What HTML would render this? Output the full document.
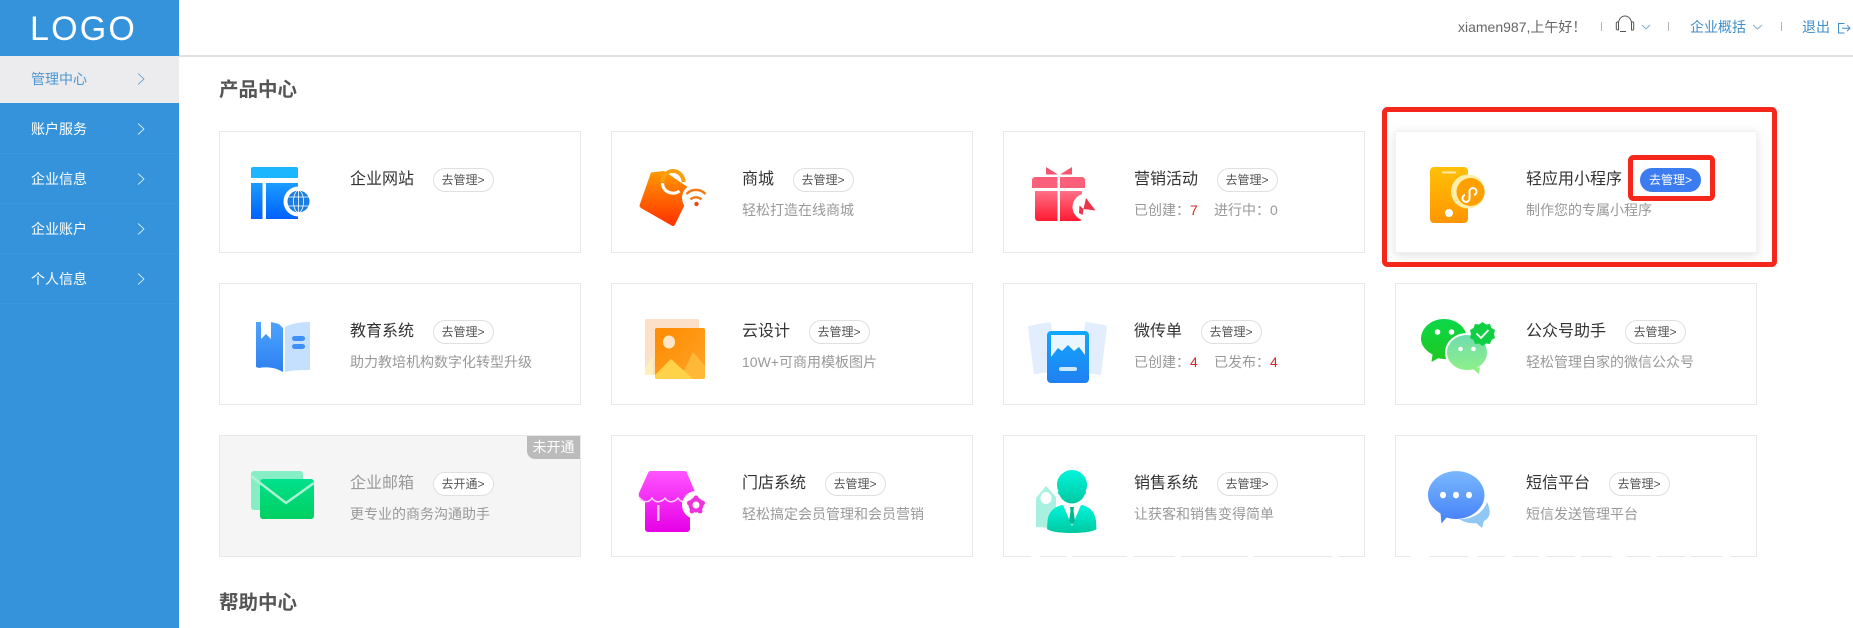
<!DOCTYPE html>
<html lang="zh-CN">
<head>
<meta charset="utf-8">
<title>管理中心</title>
<style>
*{box-sizing:border-box}
html,body{margin:0;padding:0;width:1853px;height:628px;overflow:hidden;background:#fff;font-family:"Liberation Sans","Noto Sans CJK SC",sans-serif;color:#333}
.abs{position:absolute}
#side{position:absolute;left:0;top:0;width:179px;height:628px;background:#3593db}
#logo{position:absolute;left:30px;top:7px;font-size:34px;line-height:44px;letter-spacing:2.2px;color:#fff}
.mi{position:absolute;left:0;width:179px;height:50px;border-bottom:1px solid #3a97de;color:#fff;font-size:14px;line-height:50px;padding-left:31px}
.mi.on{background:#ececee;color:#4a97d2;height:47px;line-height:46px;top:56px;border:none}
#hline{position:absolute;left:179px;top:55px;width:1674px;height:2px;background:#e0e0e0}
.h2{position:absolute;left:219px;font-size:19.5px;line-height:28px;font-weight:700;color:#555}
.c{position:absolute;width:362px;height:122px;background:#fff;border:1px solid #e8e8e8}
.c.g{background:#f5f5f5}
.c.s{border-color:#f2f2f2;box-shadow:0 2px 10px rgba(0,0,0,.13)}
.tr{position:absolute;left:130px;top:35px;height:24px;display:flex;align-items:center;white-space:nowrap}
.t{font-size:16px;line-height:24px;color:#333;position:relative;top:1px}
.g .t{color:#999}
.b{display:block;margin-left:18.5px;margin-top:2px;width:61px;height:24px;border:1px solid #dfdfdf;border-radius:12px;background:#fff;font-size:12px;line-height:22px;text-align:center;color:#555}
.b.a{background:#3b7cf0;border-color:#3b7cf0;color:#fff;margin-left:18px}
.d{position:absolute;left:130px;top:68px;font-size:14px;line-height:20px;color:#999;white-space:nowrap}
.d i{font-style:normal;color:#d22}
.d em{font-style:normal;position:absolute;left:80px;top:0}
.badge{position:absolute;right:0;top:0;width:53px;height:23px;background:#bbb;border-bottom-left-radius:8px;color:#fff;font-size:14px;line-height:22px;text-align:center}
.hd{position:absolute;top:17px;font-size:14px;line-height:20px;white-space:nowrap}
</style>
</head>
<body>
<div id="side">
  <div id="logo">LOGO</div>
  <div class="mi on">管理中心</div>
  <div class="mi" style="top:104px">账户服务</div>
  <div class="mi" style="top:154px">企业信息</div>
  <div class="mi" style="top:204px">企业账户</div>
  <div class="mi" style="top:254px">个人信息</div>
</div>
<div id="hline"></div>

<div class="hd" style="left:1458px;color:#666">xiamen987,上午好！</div>
<div class="hd" style="left:1690px;color:#3f8ecb">企业概括</div>
<div class="hd" style="left:1802px;color:#3f8ecb">退出</div>

<div class="h2" style="top:76px">产品中心</div>
<div class="h2" style="top:589px">帮助中心</div>

<div class="c" style="left:219px;top:131px"><div class="tr"><span class="t">企业网站</span><span class="b">去管理&gt;</span></div></div>
<div class="c" style="left:611px;top:131px"><div class="tr"><span class="t">商城</span><span class="b">去管理&gt;</span></div><div class="d">轻松打造在线商城</div></div>
<div class="c" style="left:1003px;top:131px"><div class="tr"><span class="t">营销活动</span><span class="b">去管理&gt;</span></div><div class="d">已创建：<i>7</i><em>进行中：0</em></div></div>
<div class="c s" style="left:1395px;top:131px"><div class="tr"><span class="t">轻应用小程序</span><span class="b a">去管理&gt;</span></div><div class="d">制作您的专属小程序</div></div>

<div class="c" style="left:219px;top:283px"><div class="tr"><span class="t">教育系统</span><span class="b">去管理&gt;</span></div><div class="d">助力教培机构数字化转型升级</div></div>
<div class="c" style="left:611px;top:283px"><div class="tr"><span class="t">云设计</span><span class="b">去管理&gt;</span></div><div class="d">10W+可商用模板图片</div></div>
<div class="c" style="left:1003px;top:283px"><div class="tr"><span class="t">微传单</span><span class="b">去管理&gt;</span></div><div class="d">已创建：<i>4</i><em>已发布：<i>4</i></em></div></div>
<div class="c" style="left:1395px;top:283px"><div class="tr"><span class="t">公众号助手</span><span class="b">去管理&gt;</span></div><div class="d">轻松管理自家的微信公众号</div></div>

<div class="c g" style="left:219px;top:435px"><div class="tr"><span class="t">企业邮箱</span><span class="b">去开通&gt;</span></div><div class="d">更专业的商务沟通助手</div><div class="badge">未开通</div></div>
<div class="c" style="left:611px;top:435px"><div class="tr"><span class="t">门店系统</span><span class="b">去管理&gt;</span></div><div class="d">轻松搞定会员管理和会员营销</div></div>
<div class="c" style="left:1003px;top:435px"><div class="tr"><span class="t">销售系统</span><span class="b">去管理&gt;</span></div><div class="d">让获客和销售变得简单</div></div>
<div class="c" style="left:1395px;top:435px"><div class="tr"><span class="t">短信平台</span><span class="b">去管理&gt;</span></div><div class="d">短信发送管理平台</div></div>

<svg class="abs" style="left:0;top:0" width="1853" height="628" viewBox="0 0 1853 628" xmlns="http://www.w3.org/2000/svg">
<defs>
<linearGradient id="gBlue" x1="0" y1="0" x2="0" y2="1"><stop offset="0" stop-color="#1b9cff"/><stop offset="1" stop-color="#0060ff"/></linearGradient>
<linearGradient id="gOr" x1="0" y1="0" x2="0" y2="1"><stop offset="0" stop-color="#ff9a00"/><stop offset="1" stop-color="#ff3000"/></linearGradient>
<linearGradient id="gRed" x1="0" y1="0" x2="0" y2="1"><stop offset="0" stop-color="#ff7088"/><stop offset="1" stop-color="#ff1a30"/></linearGradient>
<linearGradient id="gPh" x1="0" y1="0" x2="0" y2="1"><stop offset="0" stop-color="#ffc107"/><stop offset="1" stop-color="#ff9500"/></linearGradient>
<linearGradient id="gBook" x1="0" y1="0" x2="0" y2="1"><stop offset="0" stop-color="#4ca4ff"/><stop offset="1" stop-color="#2e80f0"/></linearGradient>
<linearGradient id="gImg" x1="0" y1="0" x2="1" y2="1"><stop offset="0" stop-color="#ff8a00"/><stop offset="1" stop-color="#ffa428"/></linearGradient>
<linearGradient id="gCard" x1="0" y1="0" x2="0" y2="1"><stop offset="0" stop-color="#10a8ff"/><stop offset="1" stop-color="#2080f0"/></linearGradient>
<linearGradient id="gWx" x1="0" y1="0" x2="0" y2="1"><stop offset="0" stop-color="#0ad848"/><stop offset="1" stop-color="#20c820"/></linearGradient>
<linearGradient id="gWx2" x1="0" y1="0" x2="0" y2="1"><stop offset="0" stop-color="#6fdcb0"/><stop offset="1" stop-color="#8ef088"/></linearGradient>
<linearGradient id="gMail" x1="0" y1="0" x2="0" y2="1"><stop offset="0" stop-color="#00e08c"/><stop offset="1" stop-color="#00d060"/></linearGradient>
<linearGradient id="gMag" x1="0" y1="0" x2="0" y2="1"><stop offset="0" stop-color="#ff55ff"/><stop offset="1" stop-color="#e600e6"/></linearGradient>
<linearGradient id="gTeal" x1="0" y1="0" x2="0" y2="1"><stop offset="0" stop-color="#00f5dc"/><stop offset="1" stop-color="#00c8a0"/></linearGradient>
<linearGradient id="gMsg" x1="0" y1="0" x2="0" y2="1"><stop offset="0" stop-color="#7ab8ff"/><stop offset="1" stop-color="#4480f8"/></linearGradient>
</defs>

<!-- sidebar chevrons -->
<g fill="none" stroke-width=".8">
<path d="M138 73.500L144 79L138 84.500" stroke="#4a97d2"/>
<g stroke="#fff">
<path d="M138 123.500L144 129L138 134.500"/>
<path d="M138 173.500L144 179L138 184.500"/>
<path d="M138 223.500L144 229L138 234.500"/>
<path d="M138 273.500L144 279L138 284.500"/>
</g>
</g>

<!-- header icons -->
<g fill="none" stroke="#b4b4b4"><path d="M1601.500 22V31M1668.500 22V31M1781.500 22V31"/></g>
<g fill="none" stroke="#555" stroke-width="1">
<path d="M1618.500 23.500a6.500 7.500 0 0 1 13 0"/>
<path d="M1618.500 22h-1a1.200 1.200 0 0 0-1.200 1.200v5.500a1.200 1.200 0 0 0 1.200 1.200h1zM1631.500 22h1.200a1 1 0 0 1 1 1v6a1 1 0 0 1-1 1h-1.200z"/>
<path d="M1620 31.500h6"/>
</g>
<g fill="none" stroke="#7aa8c8" stroke-width=".9"><path d="M1642 25l4 4l4-4M1753 25l4.500 4l4.500-4"/></g>
<g fill="none" stroke="#3f8ecb" stroke-width="1"><path d="M1844.500 23.500H1838.500V33H1844.500M1842 28.200H1850M1847 25.200L1850 28.200L1847 31.200"/></g>

<!-- website -->
<path d="M251 169a2 2 0 0 1 2-2h43a2 2 0 0 1 2 2v9h-47z" fill="#1cb5ff"/>
<rect x="251" y="183" width="11.500" height="36" fill="url(#gBlue)"/>
<rect x="266" y="183" width="32" height="36" fill="url(#gBlue)"/>
<circle cx="298.500" cy="201.500" r="15" fill="#fff"/>
<circle cx="298.500" cy="201.500" r="11" fill="#1a7fe0"/>
<g fill="none" stroke="#fff" stroke-width=".8"><ellipse cx="298.500" cy="201.500" rx="5" ry="11"/><path d="M298.500 190.500v22M288 197h21M288 206h21"/></g>

<!-- shop -->
<path d="M651 172.500L664 171L692 190L675 224.500a2 2 0 0 1-3 1.200L641 208a3 3 0 0 1-1.200-3.500z" fill="url(#gOr)"/>
<path d="M662.500 182a10.500 11 0 0 1 21 0" fill="none" stroke="#f8a010" stroke-width="4"/>
<path d="M662.500 183a10.500 10 0 0 0 17 8" fill="none" stroke="#fff" stroke-width="3.200"/>
<circle cx="696" cy="198" r="14" fill="#fff"/>
<g fill="none" stroke="#ee7a18" stroke-width="2.400"><path d="M686.500 194a13 13 0 0 1 19 0"/><path d="M690.500 199.500a8 8 0 0 1 11 0"/></g>
<circle cx="696.500" cy="204" r="2.200" fill="#e84a10"/>

<!-- gift -->
<path d="M1046 167l12 7.500h-12zM1072 167l-12 7.500h12z" fill="#f4566f"/>
<path d="M1032 180a3 3 0 0 1 3-3h47a3 3 0 0 1 3 3v8h-53z" fill="#fa6079"/>
<path d="M1035 191h47v27a3 3 0 0 1-3 3h-41a3 3 0 0 1-3-3z" fill="url(#gRed)"/>
<rect x="1057.500" y="174" width="2.500" height="47" fill="#fff"/>
<circle cx="1086" cy="207" r="13.500" fill="#fff"/>
<path d="M1086 198l9.500 12.500l-12-1.500zM1079.500 205.500l4 3.500l-1 6l-3.500-2z" fill="#ee3448"/>

<!-- miniprogram phone -->
<rect x="1430" y="167" width="38" height="56" rx="4" fill="url(#gPh)"/>
<rect x="1442" y="171.500" width="14" height="2" rx="1" fill="#ffe9a8"/>
<circle cx="1449" cy="213" r="4" fill="#fff"/>
<circle cx="1468" cy="191.500" r="17" fill="#fdeea8"/>
<circle cx="1470.500" cy="192" r="14" fill="#ffa000"/>
<path d="M1465 195a3.500 3.500 0 1 0 4.500 3.500v-7a3.500 3.500 0 1 1 4.500 3.500" fill="none" stroke="#fff" stroke-width="2"/>

<!-- book -->
<path d="M256 322h5v17l5-5l5 5v-17l8 2l4 4v44l-4-2c-6-3-15-3-20-2l-3-1z" fill="url(#gBook)"/>
<path d="M285 327c8-4 17-5 25-5v48c-8 0-17 0-25 2z" fill="#c5e0ff"/>
<rect x="292" y="336" width="13" height="5" rx="2.500" fill="#3f8fff"/>
<rect x="292" y="344" width="13" height="5" rx="2.500" fill="#3f8fff"/>

<!-- image -->
<rect x="645" y="319" width="54" height="56" rx="2" fill="#fde0c8"/>
<path d="M645 368l8-12v19h-6a2 2 0 0 1-2-2z" fill="#fdf0b8"/>
<rect x="655" y="328" width="50" height="51" rx="2" fill="url(#gImg)"/>
<ellipse cx="669" cy="342" rx="6" ry="6.500" fill="#fde7c8"/>
<path d="M680 379L693 352L705 366V377a2 2 0 0 1-2 2z" fill="#ffb838"/>
<path d="M655 375L671 359L693 379H657a2 2 0 0 1-2-2z" fill="#ffd24a"/>

<!-- leaflet -->
<path d="M1028 328a2 2 0 0 1 1.600-2.300l19-3.500a2 2 0 0 1 2.300 1.600l7 47l-24 3.500z" fill="#e2eefd"/>
<path d="M1085 323.500a2 2 0 0 1 2.300-1.500l18 3.300a2 2 0 0 1 1.600 2.200l-6 47.500l-22-3z" fill="#e2eefd"/>
<rect x="1047" y="331" width="42" height="52" rx="4" fill="url(#gCard)"/>
<path d="M1051 335h34v20l-6-8l-5 4l-6-6l-6 6l-4-3l-7 9z" fill="#e9f6ff"/>
<rect x="1059" y="367" width="18" height="4" rx="2" fill="#cfe8ff"/>

<!-- wechat -->
<path d="M1444 319c12.700 0 23 9 23 20s-10.300 20-23 20c-2 0-4-.3-6-.7l-6.500 3.700l1-7.500C1426 351 1421 345.500 1421 339c0-11 10.300-20 23-20z" fill="url(#gWx)"/>
<circle cx="1437.500" cy="332" r="2.800" fill="#fff"/>
<circle cx="1451.500" cy="332" r="2.800" fill="#fff"/>
<ellipse cx="1467" cy="352.500" rx="21" ry="18.500" fill="url(#gWx2)" stroke="#fff" stroke-width="2"/>
<path d="M1473 369l6 5l1-7z" fill="#8ef088"/>
<circle cx="1460.500" cy="349" r="2.300" fill="#fff"/>
<circle cx="1473.500" cy="349" r="2.300" fill="#fff"/>
<path d="M1482.500 322l3.500 2.500l4-.5l1.500 4l3.500 2l-1 4l1 4l-3.500 2l-1.500 4l-4-.5l-3.500 2.500l-3.500-2.500l-4 .5l-1.500-4l-3.500-2l1-4l-1-4l3.500-2l1.500-4l4 .5z" fill="#10cf45"/>
<path d="M1476.500 333.500l4.500 4.500l7.500-8" fill="none" stroke="#fff" stroke-width="1.800"/>

<!-- mail -->
<path d="M251 474a3 3 0 0 1 3-3h46a3 3 0 0 1 3 3v33a3 3 0 0 1-3 3h-46a3 3 0 0 1-3-3z" fill="#86eec4"/>
<rect x="260" y="479" width="54" height="40" rx="3" fill="url(#gMail)"/>
<path d="M251 476L286 503L314 483" fill="none" stroke="#a8f4d4" stroke-width="2.500"/>

<!-- store -->
<path d="M651 471h33a3 3 0 0 1 3 2l8.500 20c1 3 .5 7-3 8h-2.500v28a3 3 0 0 1-3 3h-39a3 3 0 0 1-3-3v-28h-3c-3-1-3.500-5-3-8l9-20a3 3 0 0 1 3-2z" fill="url(#gMag)"/>
<path d="M639 497c4 6 10 6 13 1c3 5 9 5 13 0c3 5 9 5 13 0c3 5 8 5 13 0" fill="none" stroke="#ffd0ff" stroke-width="1.500"/>
<rect x="657" y="505" width="2.500" height="16" fill="#ffc8ff"/>
<circle cx="696" cy="505" r="14" fill="#fff"/>
<circle cx="696" cy="505" r="5.500" fill="none" stroke="#ee33dd" stroke-width="4"/>
<g fill="#ee33dd"><circle cx="696" cy="498" r="2.500"/><circle cx="702.500" cy="503" r="2.500"/><circle cx="700" cy="511" r="2.500"/><circle cx="692" cy="511" r="2.500"/><circle cx="689.500" cy="503" r="2.500"/></g>

<!-- sales -->
<path d="M1046 486l10 11v12l-4 19l-16-1v-29z" fill="#a8f0e0"/>
<ellipse cx="1046" cy="498" rx="5.500" ry="6" fill="#fff"/>
<path d="M1072 470c8 0 15 6.500 15 14.500c0 3-.5 5-1.500 6.500c1 1 .5 3-1 4c-2 5-7 8.500-12.500 8.500s-10.500-3.500-12.500-8.500c-1.500-1-2-3-1-4c-1-1.500-1.500-3.500-1.500-6.500c0-8 7-14.500 15-14.500z" fill="url(#gTeal)"/>
<path d="M1062 505l10 2l10-2c8 2 13 7 14 16l.5 8c-4 3-14 4-24.500 4s-21-1-25-4l.5-8c1-9 6-14 14.500-16z" fill="url(#gTeal)"/>
<path d="M1063 505h18l-9 21z" fill="#fff"/>
<path d="M1070 507h4l-.5 4l1.500 10l-3 3.500l-3-3.500l1.500-10z" fill="#00b890"/>

<!-- sms -->
<path d="M1487 502C1491 510 1491 518 1484 521L1482 528L1476 523C1470 524 1464 522 1459 519C1472 520 1484 512 1487 502z" fill="#90c8f5"/>
<path d="M1456 471c15.700 0 28.500 10.800 28.500 24s-12.800 24-28.500 24c-3.500 0-6.500-.5-9.500-1.500l-5 6l-1-10c-7.500-4.500-12.500-10.500-12.500-18.500c0-13.200 12.800-24 28.500-24z" fill="url(#gMsg)"/>
<ellipse cx="1443" cy="495" rx="3" ry="3.300" fill="#fff"/>
<ellipse cx="1456" cy="495" rx="3" ry="3.300" fill="#fff"/>
<ellipse cx="1469" cy="495" rx="3" ry="3.300" fill="#fff"/>

<!-- red annotation boxes -->
<rect x="1384.500" y="109.500" width="390" height="155" rx="3" fill="none" stroke="#f5261b" stroke-width="5"/>
<rect x="1630.500" y="157.500" width="82" height="41" rx="3" fill="none" stroke="#f5261b" stroke-width="5"/>

<!-- erased specks on bottom borders -->
<g fill="#fff">
<rect x="1031" y="555" width="9" height="4"/><rect x="1066" y="555" width="6" height="4"/><rect x="1127" y="555" width="7" height="4"/><rect x="1175" y="555" width="6" height="4"/><rect x="1248" y="555" width="6" height="4"/><rect x="1332" y="555" width="7" height="4"/>
<rect x="1410" y="555" width="20" height="4"/><rect x="1468" y="555" width="10" height="4"/><rect x="1505" y="555" width="8" height="4"/><rect x="1538" y="555" width="8" height="4"/><rect x="1575" y="555" width="6" height="4"/><rect x="1612" y="555" width="15" height="4"/><rect x="1650" y="555" width="7" height="4"/><rect x="1685" y="555" width="5" height="4"/><rect x="1722" y="555" width="8" height="4"/>
</g>
</svg>
</body>
</html>
